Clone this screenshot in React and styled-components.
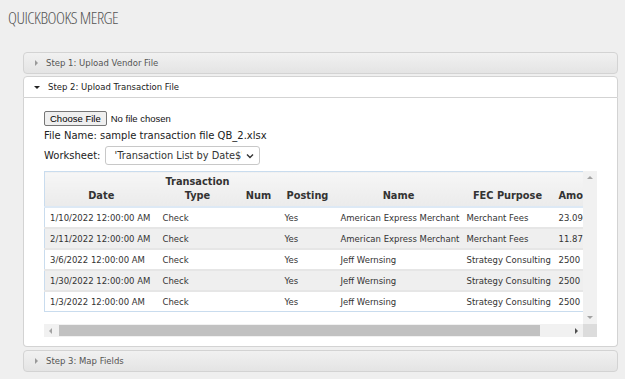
import styled, { createGlobalStyle } from "styled-components";

const GlobalStyle = createGlobalStyle`
  body {
    margin: 0;
    background: #efefef;
    font-family: "DejaVu Sans", Verdana, sans-serif;
  }
`;

const Page = styled.div`
  width: 625px;
  height: 379px;
  padding: 7px 7px 0 8px;
  box-sizing: border-box;
  overflow: hidden;
`;

const Title = styled.h1`
  margin: 0;
  font-family: "Open Sans", sans-serif;
  font-stretch: 75%;
  font-weight: 300;
  font-size: 17px;
  line-height: 22px;
  letter-spacing: -0.5px;
  color: #555;
`;

const Accordion = styled.div`
  margin: 23px 0 0 15px;
  display: flex;
  flex-direction: column;
`;

const Header = styled.div`
  height: 20px;
  margin-top: ${(p) => p.$gap ?? 2}px;
  display: flex;
  align-items: center;
  gap: 7px;
  padding-left: 10px;
  border: 1px solid #d3d3d3;
  border-radius: ${(p) => (p.$open ? "4px 4px 0 0" : "4px")};
  background: ${(p) =>
    p.$open ? "#fff" : "linear-gradient(#f1f1f1, #e4e4e4)"};
  color: ${(p) => (p.$open ? "#222" : "#555")};
  font-size: 8.5px;
`;

const Arrow = styled.span`
  width: 0;
  height: 0;
  margin-right: 1px;
  ${(p) =>
    p.$open
      ? `border-left: 3px solid transparent;
         border-right: 3px solid transparent;
         border-top: 3px solid #222;`
      : `border-top: 3px solid transparent;
         border-bottom: 3px solid transparent;
         border-left: 3px solid #999;
         margin-left: 1px;`}
`;

const Panel = styled.div`
  height: 249px;
  box-sizing: border-box;
  padding: 13px 20px 0 20px;
  background: #fff;
  border: 1px solid #d3d3d3;
  border-top: 0;
  border-radius: 0 0 4px 4px;
`;

const FileRow = styled.div`
  display: flex;
  align-items: center;
  gap: 4px;
  font-family: "Liberation Sans", Arial, sans-serif;
  font-size: 9.5px;
  color: #111;
`;

const FileButton = styled.button`
  height: 15px;
  padding: 0 5px;
  border: 1px solid #767676;
  border-radius: 2px;
  background: #efefef;
  font-family: "Liberation Sans", Arial, sans-serif;
  font-size: 9.5px;
  color: #000;
`;

const Line = styled.div`
  margin-top: ${(p) => p.$mt || 0}px;
  display: flex;
  align-items: center;
  gap: 5px;
  font-size: 10px;
  color: #222;
`;

const Select = styled.div`
  width: 155px;
  height: 19px;
  box-sizing: border-box;
  display: flex;
  align-items: center;
  gap: 4px;
  padding: 0 5px 0 8px;
  border: 1px solid #c8c8c8;
  border-radius: 3px;
  font-size: 9.8px;
  color: #333;
  white-space: nowrap;
  overflow: hidden;
`;

const SelectText = styled.span`
  flex: 1;
  overflow: hidden;
`;

const ScrollBox = styled.div`
  margin-top: 6px;
  width: 553px;
  height: 166px;
  display: grid;
  grid-template-columns: 539px 14px;
  grid-template-rows: 153px 13px;
`;

const Viewport = styled.div`
  overflow: hidden;
  background: #fff;
`;

const Table = styled.table`
  width: 600px;
  table-layout: fixed;
  border-collapse: collapse;
  border: 1px solid #c9dcee;
  font-size: 8.5px;
  color: #333;
`;

const Th = styled.th`
  height: 31px;
  padding: 0 5px 3px;
  vertical-align: bottom;
  text-align: ${(p) => p.$align || "center"};
  font-size: 9.8px;
  font-weight: bold;
  line-height: 14px;
  color: #333;
  background: linear-gradient(#f6f6f6, #ebebeb);
  border-bottom: 2px solid #dde9f5;
  white-space: nowrap;
  overflow: hidden;
`;

const Tr = styled.tr`
  background: ${(p) => (p.$alt ? "#efefef" : "#fff")};
  border-top: 2px solid #e6e6e6;
  &:first-of-type {
    border-top: 0;
  }
`;

const Td = styled.td`
  height: 19px;
  padding: 0 5px;
  white-space: nowrap;
  overflow: hidden;
`;

const Track = styled.div`
  background: #f1f1f1;
  display: flex;
  flex-direction: ${(p) => (p.$vertical ? "column" : "row")};
  align-items: center;
  justify-content: space-between;
`;

const Thumb = styled.div`
  flex: 1;
  align-self: stretch;
  margin: 1px 30px 1px 2px;
  background: #c1c1c1;
`;

const ScrollArrow = styled.span`
  width: 0;
  height: 0;
  margin: 5px;
  ${(p) =>
    ({
      up: "border-left: 3px solid transparent; border-right: 3px solid transparent; border-bottom: 3px solid #a3a3a3;",
      down: "border-left: 3px solid transparent; border-right: 3px solid transparent; border-top: 3px solid #a3a3a3;",
      left: "border-top: 3px solid transparent; border-bottom: 3px solid transparent; border-right: 3px solid #a3a3a3;",
      right: "border-top: 3px solid transparent; border-bottom: 3px solid transparent; border-left: 3px solid #505050;",
    })[p.$dir]}
`;

const Corner = styled.div`
  background: #dcdcdc;
`;

const columns = [113, 80, 42, 56, 126, 92, 91];

const rows = [
  ["1/10/2022 12:00:00 AM", "Check", "", "Yes", "American Express Merchant", "Merchant Fees", "23.09"],
  ["2/11/2022 12:00:00 AM", "Check", "", "Yes", "American Express Merchant", "Merchant Fees", "11.87"],
  ["3/6/2022 12:00:00 AM", "Check", "", "Yes", "Jeff Wernsing", "Strategy Consulting", "2500"],
  ["1/30/2022 12:00:00 AM", "Check", "", "Yes", "Jeff Wernsing", "Strategy Consulting", "2500"],
  ["1/3/2022 12:00:00 AM", "Check", "", "Yes", "Jeff Wernsing", "Strategy Consulting", "2500"],
];

const App = () => {
  return (
    <Page>
      <GlobalStyle />
      <Title>QUICKBOOKS MERGE</Title>
      <Accordion>
        <Header $gap={0}>
          <Arrow />
          Step 1: Upload Vendor File
        </Header>
        <Header $open>
          <Arrow $open />
          Step 2: Upload Transaction File
        </Header>
        <Panel>
          <FileRow>
            <FileButton>Choose File</FileButton>
            No file chosen
          </FileRow>
          <Line $mt={4}>File Name: sample transaction file QB_2.xlsx</Line>
          <Line $mt={5}>
            Worksheet:
            <Select>
              <SelectText>'Transaction List by Date$'</SelectText>
              <svg width="8" height="6" viewBox="0 0 8 6">
                <path d="M1 1.5 L4 4.5 L7 1.5" fill="none" stroke="#333" strokeWidth="1.4" />
              </svg>
            </Select>
          </Line>
          <ScrollBox>
            <Viewport>
              <Table>
                <colgroup>
                  {columns.map((w, i) => (
                    <col key={i} style={{ width: w }} />
                  ))}
                </colgroup>
                <thead>
                  <tr>
                    <Th>Date</Th>
                    <Th>
                      Transaction
                      <br />
                      Type
                    </Th>
                    <Th>Num</Th>
                    <Th>Posting</Th>
                    <Th>Name</Th>
                    <Th>FEC Purpose</Th>
                    <Th $align="left">Amount</Th>
                  </tr>
                </thead>
                <tbody>
                  {rows.map((r, i) => (
                    <Tr key={i} $alt={i % 2 === 1}>
                      {r.map((c, j) => (
                        <Td key={j}>{c}</Td>
                      ))}
                    </Tr>
                  ))}
                </tbody>
              </Table>
            </Viewport>
            <Track $vertical>
              <ScrollArrow $dir="up" />
              <ScrollArrow $dir="down" />
            </Track>
            <Track>
              <ScrollArrow $dir="left" />
              <Thumb />
              <ScrollArrow $dir="right" />
            </Track>
            <Corner />
          </ScrollBox>
        </Panel>
        <Header $gap={3}>
          <Arrow />
          Step 3: Map Fields
        </Header>
      </Accordion>
    </Page>
  );
};

export default App;
